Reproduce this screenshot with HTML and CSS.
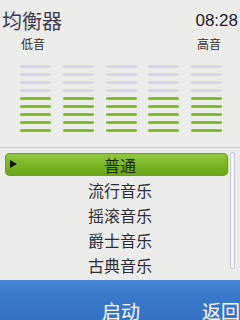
FILE: index.html
```html
<!DOCTYPE html>
<html lang="zh">
<head>
<meta charset="utf-8">
<title>均衡器</title>
<link rel="stylesheet" href="styles.css">
</head>
<body>
<div class="screen">
  <header class="header">
    <span class="title">均衡器</span>
    <span class="time">08:28</span>
  </header>
  <div class="labels">
    <span>低音</span>
    <span>高音</span>
  </div>
  <div class="eq">
    <div class="col"><i class="off"></i><i class="off"></i><i class="off"></i><i class="off"></i><i class="on"></i><i class="on"></i><i class="on"></i><i class="on"></i><i class="on"></i></div>
    <div class="col"><i class="off"></i><i class="off"></i><i class="off"></i><i class="off"></i><i class="on"></i><i class="on"></i><i class="on"></i><i class="on"></i><i class="on"></i></div>
    <div class="col"><i class="off"></i><i class="off"></i><i class="off"></i><i class="off"></i><i class="on"></i><i class="on"></i><i class="on"></i><i class="on"></i><i class="on"></i></div>
    <div class="col"><i class="off"></i><i class="off"></i><i class="off"></i><i class="off"></i><i class="on"></i><i class="on"></i><i class="on"></i><i class="on"></i><i class="on"></i></div>
    <div class="col"><i class="off"></i><i class="off"></i><i class="off"></i><i class="off"></i><i class="on"></i><i class="on"></i><i class="on"></i><i class="on"></i><i class="on"></i></div>
  </div>
  <div class="divider"></div>
  <div class="list">
    <div class="item selected"><span class="arrow"></span><span class="text">普通</span></div>
    <div class="item"><span class="text">流行音乐</span></div>
    <div class="item"><span class="text">摇滚音乐</span></div>
    <div class="item"><span class="text">爵士音乐</span></div>
    <div class="item"><span class="text">古典音乐</span></div>
    <div class="scrollbar"></div>
  </div>
  <footer class="softkeys">
    <span class="key-mid">启动</span>
    <span class="key-right">返回</span>
  </footer>
</div>
</body>
</html>
```

FILE: styles.css
```css
html, body {
  margin: 0;
  padding: 0;
}
body {
  width: 240px;
  height: 320px;
  overflow: hidden;
  background: #ececea;
  font-family: "Noto Sans CJK SC", "Noto Sans", sans-serif;
}
.screen {
  display: flex;
  flex-direction: column;
  width: 240px;
  height: 320px;
  overflow: hidden;
}
.header {
  display: flex;
  justify-content: space-between;
  align-items: flex-start;
  height: 24px;
  padding: 8px 2px 0 2px;
}
.title {
  font-size: 20px;
  line-height: 24px;
  padding-top: 1px;
  color: #3b3b4c;
}
.time {
  font-family: "Liberation Sans", Arial, sans-serif;
  font-size: 17px;
  line-height: 24px;
  padding-top: 1px;
  color: #1c1c2c;
}
.labels {
  display: flex;
  justify-content: space-between;
  height: 14px;
  margin-top: 5px;
  padding: 0 19px 0 21px;
  font-size: 12px;
  line-height: 14px;
  color: #333;
}
.eq {
  display: flex;
  gap: 11.75px;
  margin-top: 14px;
  padding-left: 20px;
}
.col {
  display: flex;
  flex-direction: column;
  gap: 5px;
  width: 31px;
}
.col i {
  display: block;
  height: 3px;
  border-radius: 2px;
}
.col i.off {
  background: #d4d6e6;
}
.col i.on {
  background: #78b51f;
  box-shadow: inset 0 0 0 0.5px #9fcf4a;
}
.divider {
  height: 1px;
  margin-top: 15px;
  background: #c9cbd6;
}
.list {
  position: relative;
  margin-top: 4px;
}
.item {
  position: relative;
  height: 25px;
  display: flex;
  align-items: center;
  justify-content: center;
  font-size: 16px;
  line-height: 20px;
  color: #2e2e38;
}
.item .text {
  position: relative;
}
.item.selected::before {
  content: "";
  position: absolute;
  left: 5px;
  right: 12px;
  top: 1px;
  bottom: 1px;
  border-radius: 5px;
  background: linear-gradient(#93c842, #78b424 55%, #68a31a);
  box-shadow: inset 0 0 0 1px #6a9f1c, 1px 0 0 #d8e8a0;
}
.item.selected .text {
  color: #1c2a0a;
}
.arrow {
  position: absolute;
  left: 10px;
  top: 8px;
  width: 0;
  height: 0;
  border-top: 4.5px solid transparent;
  border-bottom: 4.5px solid transparent;
  border-left: 7px solid #151515;
}
.scrollbar {
  position: absolute;
  right: 5px;
  top: 0;
  width: 3px;
  height: 115px;
  border: 1px solid #c5c8da;
  border-radius: 2px;
  background: #f6f6fa;
}
.softkeys {
  position: relative;
  margin-top: 3px;
  height: 40px;
  background: linear-gradient(#4a88d6, #3a78ca 40%, #3572c4);
  color: #ffffff;
  font-size: 19px;
  line-height: 22px;
}
.key-mid {
  position: absolute;
  left: 102px;
  top: 20px;
}
.key-right {
  position: absolute;
  left: 202px;
  top: 20px;
}
```
